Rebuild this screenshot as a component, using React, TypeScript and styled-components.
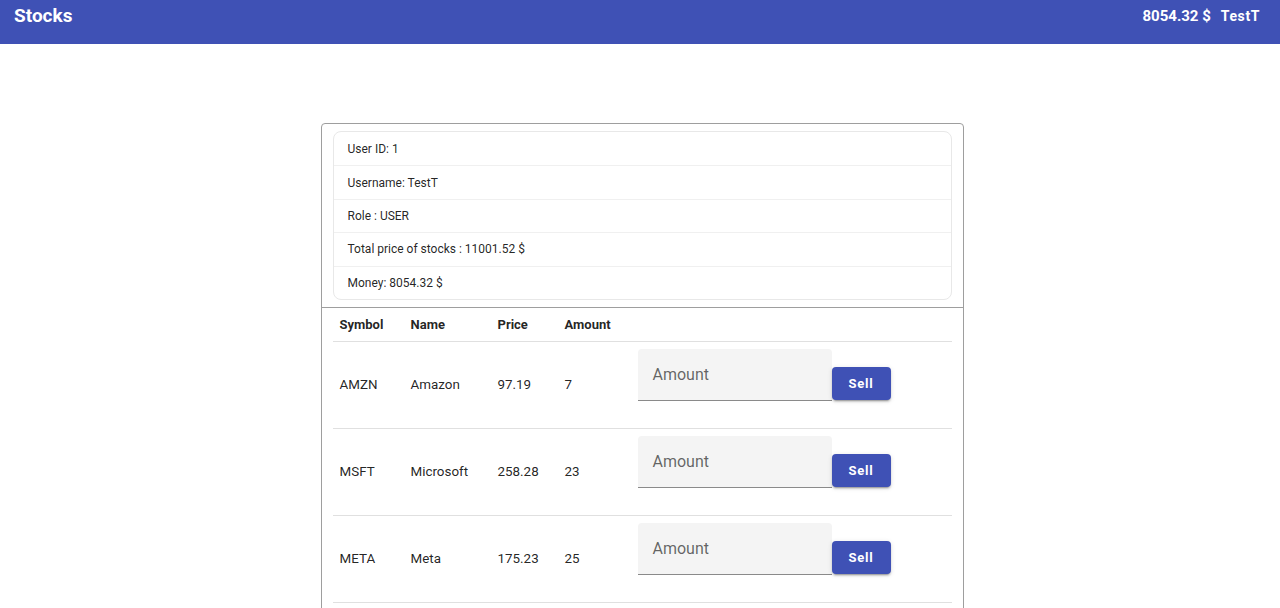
import React from "react";
import styled, { createGlobalStyle } from "styled-components";

const Global = createGlobalStyle`
  html, body { margin: 0; padding: 0; background: #fff; }
  body { font-family: Roboto, "Liberation Sans", Arial, sans-serif; color: rgba(0,0,0,0.87); }
  * { box-sizing: border-box; }
`;

const AppBar = styled.header`
  height: 44px;
  background: #3f51b5;
  color: #fff;
  display: flex;
  align-items: flex-start;
  justify-content: space-between;
  padding: 5px 20px 0 14px;
`;

const Brand = styled.div`
  font-size: 19px;
  font-weight: 700;
  line-height: 22px;
`;

const UserBox = styled.div`
  display: flex;
  align-items: center;
  gap: 10px;
  height: 22px;
`;

const Balance = styled.span`
  font-size: 15px;
  font-weight: 700;
`;

const UserName = styled.span`
  font-size: 14px;
  font-weight: 700;
  letter-spacing: 0.6px;
`;

const Main = styled.main`
  display: flex;
  justify-content: center;
  padding: 79px 0 0 4px;
`;

const Card = styled.section`
  width: 643px;
  border: 1px solid #9e9e9e;
  border-radius: 4px;
  padding: 7px 11px 8px 11px;
`;

const InfoList = styled.ul`
  list-style: none;
  margin: 0 0 7px 0;
  padding: 0;
  border: 1px solid #e8e8e8;
  border-radius: 8px;
`;

const InfoItem = styled.li`
  height: 33.4px;
  display: flex;
  align-items: center;
  padding-left: 14px;
  font-size: 12px;
  color: rgba(0,0,0,0.87);
  border-top: 1px solid #f0f0f0;
  &:first-child { border-top: none; }
`;

const Separator = styled.hr`
  margin: 0 -11px;
  border: none;
  border-top: 1px solid #9e9e9e;
`;

const Table = styled.table`
  width: 100%;
  border-collapse: collapse;
`;

const HeadCell = styled.th<{ $w?: string }>`
  height: 34px;
  text-align: left;
  font-size: 13px;
  font-weight: 700;
  padding: 0 0 1px 7px;
  width: ${p => p.$w || "auto"};
  border-bottom: 1px solid #e0e0e0;
`;

const Row = styled.tr`
  height: 87px;
  border-bottom: 1px solid #e0e0e0;
`;

const Cell = styled.td`
  font-size: 13.4px;
  padding: 0 0 2px 7px;
  vertical-align: middle;
`;

const ActionCell = styled.td`
  padding: 0;
  vertical-align: middle;
`;

const Actions = styled.div`
  display: flex;
  align-items: center;
`;

const Field = styled.div`
  width: 194px;
  height: 52px;
  background: #f4f4f4;
  border-radius: 4px 4px 0 0;
  border-bottom: 1px solid #8a8a8a;
  padding: 16px 0 0 15px;
  font-size: 16px;
  color: rgba(0,0,0,0.6);
  margin-bottom: 21px;
`;

const SellButton = styled.button`
  width: 59px;
  height: 33px;
  margin-bottom: 3px;
  background: #3f51b5;
  color: #fff;
  border: none;
  border-radius: 4px;
  font-family: Roboto, "Liberation Sans", Arial, sans-serif;
  font-size: 13px;
  font-weight: 700;
  letter-spacing: 0.8px;
  box-shadow: 0 3px 1px -2px rgba(0,0,0,0.2), 0 2px 2px 0 rgba(0,0,0,0.14), 0 1px 5px 0 rgba(0,0,0,0.12);
`;

const stocks = [
  { symbol: "AMZN", name: "Amazon", price: "97.19", amount: 7 },
  { symbol: "MSFT", name: "Microsoft", price: "258.28", amount: 23 },
  { symbol: "META", name: "Meta", price: "175.23", amount: 25 },
];

export default function App() {
  return (
    <>
      <Global />
      <AppBar>
        <Brand>Stocks</Brand>
        <UserBox>
          <Balance>8054.32 $</Balance>
          <UserName>TestT</UserName>
        </UserBox>
      </AppBar>
      <Main>
        <Card>
          <InfoList>
            <InfoItem>User ID: 1</InfoItem>
            <InfoItem>Username: TestT</InfoItem>
            <InfoItem>Role : USER</InfoItem>
            <InfoItem>Total price of stocks : 11001.52 $</InfoItem>
            <InfoItem>Money: 8054.32 $</InfoItem>
          </InfoList>
          <Separator />
          <Table>
            <thead>
              <tr>
                <HeadCell $w="71px">Symbol</HeadCell>
                <HeadCell $w="87px">Name</HeadCell>
                <HeadCell $w="67px">Price</HeadCell>
                <HeadCell $w="80px">Amount</HeadCell>
                <HeadCell />
              </tr>
            </thead>
            <tbody>
              {stocks.map(s => (
                <Row key={s.symbol}>
                  <Cell>{s.symbol}</Cell>
                  <Cell>{s.name}</Cell>
                  <Cell>{s.price}</Cell>
                  <Cell>{s.amount}</Cell>
                  <ActionCell>
                    <Actions>
                      <Field>Amount</Field>
                      <SellButton>Sell</SellButton>
                    </Actions>
                  </ActionCell>
                </Row>
              ))}
            </tbody>
          </Table>
        </Card>
      </Main>
    </>
  );
}
